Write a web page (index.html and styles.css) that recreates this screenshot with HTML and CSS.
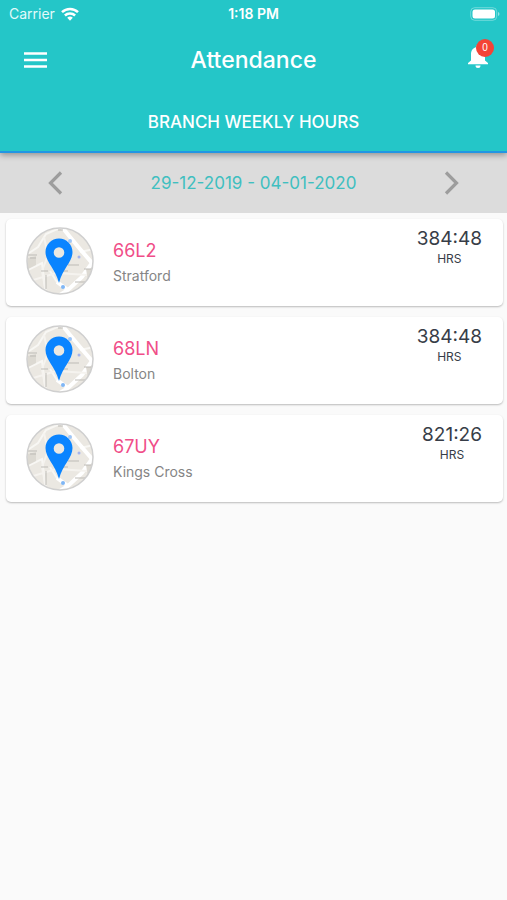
FILE: index.html
```html
<!DOCTYPE html>
<html lang="en">
<head>
<meta charset="utf-8">
<meta name="viewport" content="width=device-width, initial-scale=1">
<title>Attendance</title>
<link rel="stylesheet" href="styles.css">
</head>
<body>
<svg class="defs" aria-hidden="true">
  <defs>
    <clipPath id="disc"><circle cx="34" cy="34" r="33"/></clipPath>
    <symbol id="map" viewBox="0 0 68 68">
      <g clip-path="url(#disc)">
        <rect width="68" height="68" fill="#ebe8e2"/>
        <path d="M0 28 12 20 20 7 36 0M0 44 16 36 20 68M54 25 68 22M42 63 31 55 24 44M44 12 38 20" fill="none" stroke="#f8f7f4" stroke-width="2"/>
        <path d="M36 0 44 10 54 22 66 36 56 50 42 63 34 68M42 63 31 55" fill="none" stroke="#fff" stroke-width="4"/>
        <path d="M18 10 22 28 16 44 20 66M4 54 30 46 62 48" fill="none" stroke="#f5f3ef" stroke-width="2"/>
        <path d="M60 42h8v9l-6 3zM2 31l8-2v9l-8 4z" fill="#dcd9d2"/>
        <path d="M2 28h9M4 31h6M42 38h11M58 42h9M49 55h11M15 44h7M32 3h5M20 48v14M34 44h8" fill="none" stroke="#bdbbb6" stroke-width="1"/>
        <circle cx="44" cy="14" r="2" fill="#9dc5f6"/>
        <circle cx="53" cy="30" r="1.5" fill="#a6b4ec"/>
        <circle cx="37" cy="60" r="2" fill="#7fb6f5"/>
      </g>
      <circle cx="34" cy="34" r="33" fill="none" stroke="#cfcfcf" stroke-width="1.5"/>
      <path fill="#0a84ff" fill-rule="evenodd" d="M33 11.500C25.500 11.500 19.500 17.500 19.500 25 19.500 35 29 41 33 56 37 41 46.500 35 46.500 25 46.500 17.500 40.500 11.500 33 11.500zm0 8.700a5.300 5.300 0 1 1 0 10.600 5.300 5.300 0 0 1 0-10.600z"/>
    </symbol>
  </defs>
</svg>
<header class="header">
  <div class="status">
    <div class="carrier">
      <span>Carrier</span>
      <svg width="18" height="14" viewBox="0 0 18 14" aria-hidden="true">
        <g fill="none" stroke="#fff" stroke-width="2.500">
          <path d="M1 5.200a11.500 11.500 0 0 1 16 0"/>
          <path d="M3.900 8.500a7.300 7.300 0 0 1 10.200 0"/>
        </g>
        <path fill="#fff" d="M6.200 10.800a4 4 0 0 1 5.600 0L9 13.700z"/>
      </svg>
    </div>
    <strong class="clock">1:18 PM</strong>
    <svg class="battery" width="30" height="14" viewBox="0 0 30 14" aria-hidden="true">
      <rect x=".7" y=".7" width="26" height="12.600" rx="4" fill="none" stroke="#fff" stroke-opacity=".35"/>
      <rect x="2.500" y="2.500" width="22.500" height="9" rx="2.500" fill="#fff"/>
      <path d="M28 5v4q1.500-.6 1.500-2T28 5z" fill="#fff" opacity=".5"/>
    </svg>
  </div>
  <div class="toolbar">
    <button class="icon-button" type="button" aria-label="Menu">
      <svg width="24" height="16" viewBox="0 0 24 16"><path d="M0 1.500h23M0 8h23M0 14.500h23" stroke="#fff" stroke-width="2.600"/></svg>
    </button>
    <h1 class="title">Attendance</h1>
    <button class="icon-button bell" type="button" aria-label="Notifications">
      <svg width="20" height="24" viewBox="0 0 20 24"><path fill="#fff" d="M10 24a2.500 2.500 0 0 0 2.500-2.500h-5A2.500 2.500 0 0 0 10 24zM17 16.500V10.500C17 6.600 15 3.800 11.600 3V2.200a1.600 1.600 0 0 0-3.200 0V3C5 3.800 3 6.600 3 10.500v6L0 19v1.200h20V19z"/></svg>
      <span class="badge">0</span>
    </button>
  </div>
  <h2 class="tab">BRANCH WEEKLY HOURS</h2>
</header>
<nav class="week" aria-label="Week">
  <button class="icon-button" type="button" aria-label="Previous week">
    <svg width="16" height="24" viewBox="0 0 16 24"><path d="M14 1.500 3.500 12 14 22.500" fill="none" stroke="#9d9d9d" stroke-width="3.200"/></svg>
  </button>
  <span>29-12-2019 - 04-01-2020</span>
  <button class="icon-button" type="button" aria-label="Next week">
    <svg width="16" height="24" viewBox="0 0 16 24"><path d="M2 1.500 12.500 12 2 22.500" fill="none" stroke="#9d9d9d" stroke-width="3.200"/></svg>
  </button>
</nav>
<main class="list">
  <article class="card">
    <svg class="map" aria-hidden="true"><use href="#map"/></svg>
    <div class="branch"><h3 class="code">66L2</h3><p class="place">Stratford</p></div>
    <div class="hours"><span class="total">384:48</span><span class="unit">HRS</span></div>
  </article>
  <article class="card">
    <svg class="map" aria-hidden="true"><use href="#map"/></svg>
    <div class="branch"><h3 class="code">68LN</h3><p class="place">Bolton</p></div>
    <div class="hours"><span class="total">384:48</span><span class="unit">HRS</span></div>
  </article>
  <article class="card">
    <svg class="map" aria-hidden="true"><use href="#map"/></svg>
    <div class="branch"><h3 class="code">67UY</h3><p class="place">Kings Cross</p></div>
    <div class="hours"><span class="total">821:26</span><span class="unit">HRS</span></div>
  </article>
</main>
</body>
</html>
```
FILE: styles.css
```css
* { box-sizing: border-box; }
body {
  margin: 0;
  background: #fafafa;
  font-family: Inter, "Liberation Sans", sans-serif;
}
h1, h2, h3, p { margin: 0; font-weight: 400; }
svg { display: block; }
.defs { position: absolute; width: 0; height: 0; }
.header {
  position: relative;
  background: #24c6c8;
  border-bottom: 2px solid #2196e3;
  box-shadow: 0 2px 6px rgba(0, 0, 0, .35);
  color: #fff;
}
.status {
  display: grid;
  grid-template-columns: 1fr auto 1fr;
  align-items: center;
  height: 27px;
  padding: 0 7px;
  font-size: 14px;
}
.carrier { display: flex; align-items: center; gap: 6px; padding-left: 2px; color: #e2fafa; }
.clock { font-weight: 600; }
.battery { justify-self: end; }
.toolbar {
  display: grid;
  grid-template-columns: 1fr auto 1fr;
  align-items: center;
  height: 66px;
  padding: 0 19px;
}
.icon-button {
  justify-self: start;
  padding: 0;
  border: 0;
  background: none;
  cursor: pointer;
}
.toolbar > .icon-button:first-child { margin-left: 5px; }
.bell { position: relative; justify-self: end; margin-bottom: 8px; }
.badge {
  position: absolute;
  top: -5px;
  right: -6px;
  width: 18px;
  height: 18px;
  border-radius: 50%;
  background: #f44336;
  color: #fff;
  font-family: inherit;
  font-size: 10px;
  line-height: 18px;
  text-align: center;
}
.title { font-size: 23px; font-weight: 500; }
.tab {
  padding: 16px;
  font-size: 17px;
  font-weight: 500;
  line-height: 26px;
  text-align: center;
}
.week {
  display: flex;
  align-items: center;
  justify-content: space-between;
  height: 60px;
  padding: 0 47px;
  background: #dcdcdc;
  color: #40bfc0;
  font-size: 17px;
}
.list {
  display: grid;
  gap: 11px;
  padding: 6px 4px 6px 6px;
}
.card {
  display: flex;
  align-items: flex-start;
  min-height: 87px;
  padding: 8px 21px 8px 20px;
  border-radius: 5px;
  background: #fff;
  box-shadow: 0 1px 2px rgba(0, 0, 0, .26);
}
.map { flex: none; width: 68px; height: 68px; }
.branch { flex: 1; padding: 12px 0 0 19px; }
.code { color: #f04e88; font-size: 18px; line-height: 24px; }
.place { padding-top: 4px; color: #858585; font-size: 14px; line-height: 18px; }
.hours {
  display: flex;
  flex-direction: column;
  align-items: center;
  color: #373d47;
}
.total { font-size: 19px; line-height: 24px; }
.unit { font-size: 12px; line-height: 16px; }
```
